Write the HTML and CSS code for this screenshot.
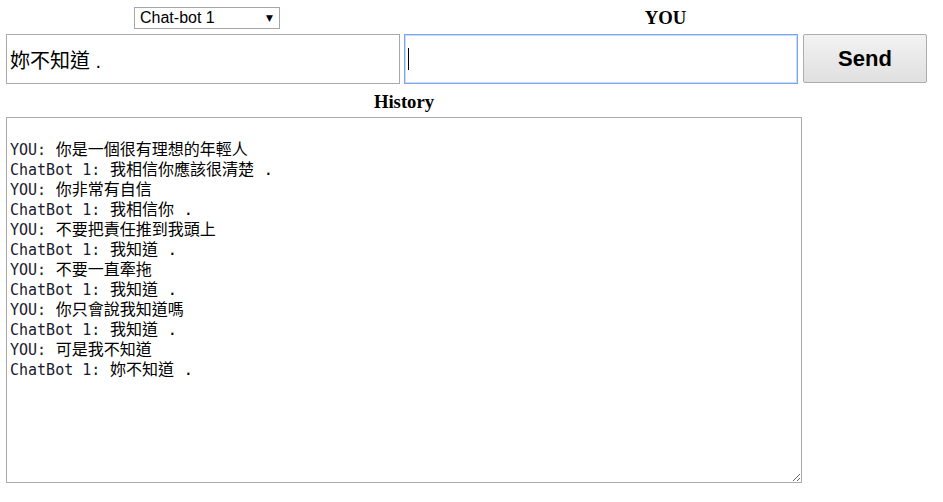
FILE: index.html
```html
<!DOCTYPE html>
<html lang="zh-Hant">
<head>
<meta charset="utf-8">
<title>Chat-bot</title>
<link rel="stylesheet" href="styles.css">
</head>
<body>
<div class="chat">
  <div class="top">
    <div class="bot-pick">
      <span class="select-wrap">
        <select class="bot-select"><option>Chat-bot 1</option><option>Chat-bot 2</option></select>
        <span class="select-arrow">&#9660;</span>
      </span>
    </div>
    <h3 class="you-title">YOU</h3>
    <div class="cell"><input class="reply" type="text" value="妳不知道 ." readonly></div>
    <div class="cell input-wrap"><input class="msg" type="text"><span class="caret"></span></div>
    <div class="cell"><button class="send" type="button">Send</button></div>
  </div>
  <section class="history">
    <h3 class="history-title">History</h3>
    <div class="log" role="textbox" aria-readonly="true">
      <div class="line"><span class="who">YOU:</span><span class="msg-text"> 你是一個很有理想的年輕人</span></div>
      <div class="line"><span class="who">ChatBot 1:</span><span class="msg-text"> 我相信你應該很清楚 .</span></div>
      <div class="line"><span class="who">YOU:</span><span class="msg-text"> 你非常有自信</span></div>
      <div class="line"><span class="who">ChatBot 1:</span><span class="msg-text"> 我相信你 .</span></div>
      <div class="line"><span class="who">YOU:</span><span class="msg-text"> 不要把責任推到我頭上</span></div>
      <div class="line"><span class="who">ChatBot 1:</span><span class="msg-text"> 我知道 .</span></div>
      <div class="line"><span class="who">YOU:</span><span class="msg-text"> 不要一直牽拖</span></div>
      <div class="line"><span class="who">ChatBot 1:</span><span class="msg-text"> 我知道 .</span></div>
      <div class="line"><span class="who">YOU:</span><span class="msg-text"> 你只會說我知道嗎</span></div>
      <div class="line"><span class="who">ChatBot 1:</span><span class="msg-text"> 我知道 .</span></div>
      <div class="line"><span class="who">YOU:</span><span class="msg-text"> 可是我不知道</span></div>
      <div class="line"><span class="who">ChatBot 1:</span><span class="msg-text"> 妳不知道 .</span></div>
    </div>
  </section>
</div>
</body>
</html>
```
FILE: styles.css
```css
html, body {
  margin: 0;
  padding: 0;
  background: #ffffff;
}

body {
  font-family: "Liberation Serif", "Noto Sans CJK TC", serif;
  color: #000000;
}

.chat {
  padding: 6px 0 0 6px;
}

.top {
  display: grid;
  grid-template-columns: 398px 399px 124px;
  grid-template-rows: 24px 50px;
  row-gap: 4px;
}

.bot-pick {
  display: flex;
  justify-content: center;
  align-items: center;
}

.select-wrap {
  position: relative;
  display: inline-block;
  margin-left: 4px;
}

.bot-select {
  -webkit-appearance: none;
  appearance: none;
  width: 146px;
  height: 22px;
  box-sizing: border-box;
  border: 1px solid #a6a6a6;
  border-radius: 0;
  background: #ffffff;
  padding: 0 0 0 5px;
  font-family: "Liberation Sans", Arial, sans-serif;
  font-size: 16px;
  color: #000000;
  line-height: 20px;
  outline: none;
}

.select-arrow {
  position: absolute;
  right: 7px;
  top: 6px;
  font-family: "DejaVu Sans", sans-serif;
  font-size: 9px;
  line-height: 10px;
  color: #000000;
  pointer-events: none;
}

.you-title {
  grid-column: 2 / 4;
  margin: 0;
  font-size: 18.7px;
  font-weight: bold;
  line-height: 24px;
  text-align: center;
}

.cell {
  display: flex;
}

.reply, .msg {
  width: 394px;
  height: 50px;
  box-sizing: border-box;
  margin: 0;
  padding: 0 3px;
  border: 1px solid #a9a9a9;
  border-radius: 0;
  font-family: "Liberation Sans", "Noto Sans CJK TC", sans-serif;
  font-size: 20px;
  color: #000000;
  background: #ffffff;
  outline: none;
}

.input-wrap {
  position: relative;
}

.msg {
  border-color: #7ba6ee;
  box-shadow: 0 0 0 1px #c9dcf8 inset;
}

.caret {
  position: absolute;
  left: 4px;
  top: 14px;
  width: 1px;
  height: 22px;
  background: #000000;
}

.send {
  width: 124px;
  height: 49px;
  margin: 0;
  padding: 0;
  box-sizing: border-box;
  border: 1px solid #acacac;
  border-radius: 2px;
  background: linear-gradient(#f2f2f2, #e0e0e0);
  font-family: "Liberation Sans", Arial, sans-serif;
  font-size: 22px;
  font-weight: bold;
  color: #000000;
}

.history {
  width: 796px;
}

.history-title {
  margin: 0;
  padding: 6px 0 3px;
  font-size: 18.7px;
  font-weight: bold;
  line-height: 24px;
  text-align: center;
}

.log {
  height: 366px;
  box-sizing: border-box;
  border: 1px solid #a9a9a9;
  padding: 22px 3px 2px 3px;
  overflow: auto;
  resize: both;
  line-height: 20px;
}

.line {
  height: 20px;
  white-space: pre;
}

.who {
  font-family: "DejaVu Sans Mono", monospace;
  font-size: 15px;
  color: #1a1a2e;
}

.msg-text {
  font-family: "DejaVu Sans Mono", "Noto Sans CJK TC", monospace;
  font-size: 16px;
  color: #000000;
}
```
